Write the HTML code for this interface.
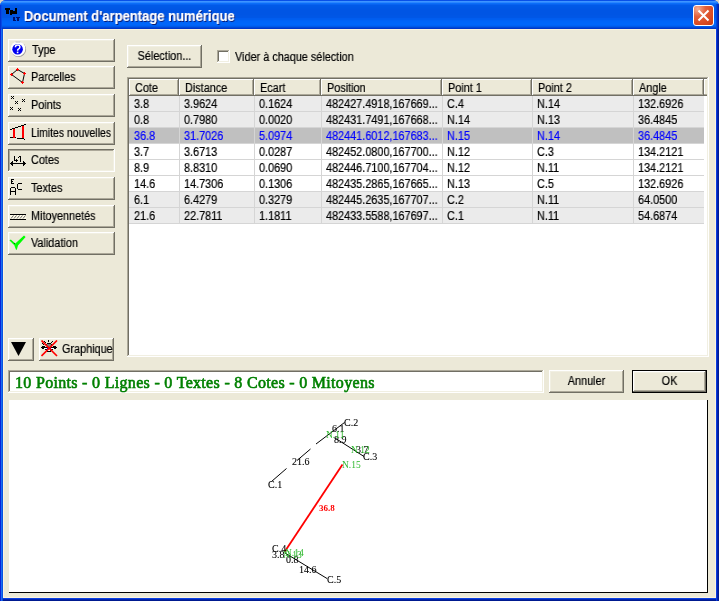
<!DOCTYPE html><html><head><meta charset="utf-8"><style>
*{margin:0;padding:0;box-sizing:border-box}
html,body{width:719px;height:601px;overflow:hidden;background:#ddd6c0}
body{position:relative;font-family:"Liberation Sans",sans-serif;font-size:11px;color:#000}
.a{position:absolute}
.t{position:absolute;white-space:nowrap;line-height:14px;font-size:12px;transform:scaleX(0.905);transform-origin:0 0;will-change:transform;-webkit-text-stroke:0.2px currentColor}
.c{transform-origin:50% 0}
.b{position:absolute;background:#ece9d8;box-shadow:inset -1px -1px #716f64,inset 1px 1px #ffffff,inset -2px -2px #aca899,inset 2px 2px #f1efe2}
.p{position:absolute;background:#ece9d8;box-shadow:inset -1px -1px #ffffff,inset 1px 1px #716f64,inset -2px -2px #f1efe2,inset 2px 2px #aca899}
.s{position:absolute;box-shadow:inset -1px -1px #ffffff,inset 1px 1px #aca899,inset -2px -2px #f1efe2,inset 2px 2px #716f64}
.h{position:absolute;background:#ece9d8;box-shadow:inset -1px -1px #716f64,inset 1px 1px #ffffff,inset -2px -2px #aca899}
</style></head><body><div class="a" style="left:0;top:0;width:719px;height:601px;background:#0a3ce0;border-radius:6px 6px 0 0;overflow:hidden">
<div class="a" style="left:0;top:0;width:719px;height:29px;background:linear-gradient(180deg,#0850e8 0px,#0850e8 1px,#3d95ff 1px,#3d95ff 2px,#2a85ff 2px,#2a85ff 3px,#0a6ef8 3px,#0a6ef8 4px,#0862f0 4px,#0862f0 5px,#005ae8 5px,#005ae8 6px,#0059e7 6px,#0059e7 7px,#0058e6 7px,#0058e6 8px,#0057e5 8px,#0057e5 9px,#0056e4 9px,#0056e4 10px,#0055e4 10px,#0055e4 11px,#0055e4 11px,#0055e4 12px,#0055e4 12px,#0055e4 13px,#0055e4 13px,#0055e4 14px,#0055e4 14px,#0055e4 15px,#0056e5 15px,#0056e5 16px,#0056e6 16px,#0056e6 17px,#0057e6 17px,#0057e6 18px,#005cef 18px,#005cef 19px,#005eef 19px,#005eef 20px,#0062f6 20px,#0062f6 21px,#0064f8 21px,#0064f8 22px,#0065f9 22px,#0065f9 23px,#0066fa 23px,#0066fa 24px,#0066fa 24px,#0066fa 25px,#0062f5 25px,#0062f5 26px,#005ae8 26px,#005ae8 27px,#0048d8 27px,#0048d8 28px,#0038c8 28px,#0038c8 29px)"></div>
<div class="a" style="left:0;top:29px;width:3px;height:572px;background:linear-gradient(90deg,#0a22d6 0,#0a22d6 1px,#1a6ef2 1px,#1a6ef2 2px,#0854e0 2px)"></div>
<div class="a" style="left:716px;top:29px;width:3px;height:572px;background:linear-gradient(90deg,#0a3ce0 0,#0a3ce0 1px,#0022b0 1px,#0022b0 2px,#001a90 2px)"></div>
<div class="a" style="left:3px;top:598px;width:713px;height:3px;background:linear-gradient(180deg,#0a40e0 0,#0a40e0 1px,#0022b0 1px,#0022b0 2px,#001a90 2px)"></div>
<div class="a" style="left:0;top:5px;width:2px;height:24px;background:linear-gradient(90deg,#0034d4 0,#0034d4 1px,#0848e4 1px)"></div>
<div class="a" style="left:716px;top:4px;width:3px;height:25px;background:linear-gradient(90deg,#0044dc 0,#0044dc 1px,#0030c4 1px,#0030c4 2px,#0022a8 2px)"></div>
</div>
<div class="a" style="left:3px;top:29px;width:713px;height:569px;background:#ece9d8;box-shadow:inset 1px 1px #fdf3dc,inset -1px -1px #fdf3dc"></div>
<svg class="a" style="left:0;top:0" width="24" height="24" shape-rendering="crispEdges">
<path fill="#000" d="M5 8h5v2h-5zM6 10h3v4h-3zM10 10h3v4h-3zM13 11h2v3h-2zM10 14h2v1h-2zM15 8h2v6h-2z"/>
<path fill="#00106a" d="M13 17h2v4h-2zM15 20h1v1h-1zM16 17h4v1h-4zM17 18h2v3h-2z"/>
</svg>
<div class="t" style="left:24px;top:8px;font-size:14px;font-weight:bold;color:#fff;line-height:16px;text-shadow:1px 1px #0a1a70;transform:scaleX(0.93);transform-origin:0 0">Document d'arpentage numérique</div>
<div class="a" style="left:693px;top:5px;width:21px;height:21px;border:1px solid #fff;border-radius:3px;background:radial-gradient(circle at 20% 15%,#f4ae94 0,#e2603c 35%,#da4a22 70%,#c63a14 100%)"></div>
<svg class="a" style="left:693px;top:5px" width="21" height="21"><path d="M5.5 5.5L15.5 15.5M15.5 5.5L5.5 15.5" stroke="#fff" stroke-width="2"/></svg>
<div class="b" style="left:8px;top:39px;width:107px;height:23px"></div>
<svg class="a" style="left:8px;top:39px" width="24" height="23" viewBox="0 0 24 23"><circle cx="10.5" cy="10.5" r="7.6" fill="#9a9a9a"/><circle cx="10" cy="9.8" r="7.4" fill="#fff"/><path d="M7.5 3h5" stroke="#bbb"/><circle cx="9.6" cy="10.2" r="5.3" fill="#0000f0"/><path d="M7.4 8.2q0-2.2 2.3-2.2t2.2 2q0 1.2-1.2 1.8t-1.1 1.9" stroke="#fff" stroke-width="1.5" fill="none"/><rect x="8.8" y="12.6" width="1.6" height="1.6" fill="#fff"/></svg>
<div class="t" style="left:32px;top:43px">Type</div>
<div class="b" style="left:8px;top:66px;width:107px;height:23px"></div>
<svg class="a" style="left:8px;top:66px" width="24" height="23" viewBox="0 0 24 23"><path d="M3.5 8.5L9.5 3.5L16.5 7.5L14.5 16.5Z" stroke="#000" fill="none" stroke-width="1"/><path shape-rendering="crispEdges" fill="#f00" d="M2 8h3v1h-3zM3 7h1v3h-1zM8 3h3v1h-3zM9 2h1v3h-1zM15 7h3v1h-3zM16 6h1v3h-1zM13 16h3v1h-3zM14 15h1v3h-1z"/></svg>
<div class="t" style="left:31px;top:70px">Parcelles</div>
<div class="b" style="left:8px;top:94px;width:107px;height:23px"></div>
<svg class="a" style="left:8px;top:94px" width="24" height="23" viewBox="0 0 24 23"><path d="M3 2h1v1h-1zM5 2h1v1h-1zM4 3h1v1h-1zM3 4h1v1h-1zM5 4h1v1h-1z" fill="#000"/><path d="M7 7h1v1h-1zM9 7h1v1h-1zM8 8h1v1h-1zM7 9h1v1h-1zM9 9h1v1h-1z" fill="#000"/><path d="M14 5h1v1h-1zM16 5h1v1h-1zM15 6h1v1h-1zM14 7h1v1h-1zM16 7h1v1h-1z" fill="#000"/><path d="M2 13h1v1h-1zM4 13h1v1h-1zM3 14h1v1h-1zM2 15h1v1h-1zM4 15h1v1h-1z" fill="#000"/><path d="M10 14h1v1h-1zM12 14h1v1h-1zM11 15h1v1h-1zM10 16h1v1h-1zM12 16h1v1h-1z" fill="#000"/></svg>
<div class="t" style="left:31px;top:98px">Points</div>
<div class="b" style="left:8px;top:122px;width:107px;height:23px"></div>
<svg class="a" style="left:8px;top:122px" width="24" height="23" viewBox="0 0 24 23"><g shape-rendering="crispEdges"><path fill="#000" d="M2 7h2v1h-2zM4 6h3v1h-3zM7 5h3v1h-3zM10 4h3v1h-3zM13 3h3v1h-3zM16 2h2v1h-2zM2 15h6v1h-6zM9 16h7v1h-7zM16 17h1v1h-1z"/><path fill="#f00" d="M5 7h2v9h-2zM14 4h2v12h-2z"/></g></svg>
<div class="t" style="left:31px;top:126px;transform:scaleX(0.87)">Limites nouvelles</div>
<div class="p" style="left:8px;top:149px;width:107px;height:23px"></div>
<svg class="a" style="left:8px;top:149px" width="24" height="23" viewBox="0 0 24 23"><g shape-rendering="crispEdges" fill="#000"><path d="M2 14h16v1h-16z"/><path d="M2 14h1v1h-1zM3 13h1v3h-1zM4 12h1v5h-1z"/><path d="M17 14h1v1h-1zM16 13h1v3h-1zM15 12h1v5h-1z"/><path d="M6 7h1v4h3v1h-4zM8 10h1v3h-1zM10 8h1v1h-1zM12 7h1v6h-1zM11 7h1v1h-1z"/></g></svg>
<div class="t" style="left:31px;top:153px">Cotes</div>
<div class="b" style="left:8px;top:177px;width:107px;height:23px"></div>
<svg class="a" style="left:8px;top:177px" width="24" height="23" viewBox="0 0 24 23"><path shape-rendering="crispEdges" fill="#000" d="M3 2h3v1h-3zM3 3h1v3h-1zM3 4h2v1h-2zM3 6h3v1h-3zM3 10h4v1h-4zM2 11h1v7h-1zM7 11h1v7h-1zM3 14h4v1h-4zM10 6h4v1h-4zM9 7h1v5h-1zM10 12h4v1h-4z"/></svg>
<div class="t" style="left:31px;top:181px">Textes</div>
<div class="b" style="left:8px;top:205px;width:107px;height:23px"></div>
<svg class="a" style="left:8px;top:205px" width="24" height="23" viewBox="0 0 24 23"><g shape-rendering="crispEdges"><path fill="#000" d="M2 9h16v1h-16zM2 14h16v1h-16z"/><path fill="#fffbe8" d="M2 10h16v4h-16z"/></g><g stroke="#666" stroke-width="1"><path d="M3 13.5L5.5 10.5M6 13.5L8.5 10.5M9 13.5L11.5 10.5M12 13.5L14.5 10.5M15 13.5L17.5 10.5"/></g></svg>
<div class="t" style="left:31px;top:209px">Mitoyennetés</div>
<div class="b" style="left:8px;top:232px;width:107px;height:23px"></div>
<svg class="a" style="left:8px;top:232px" width="24" height="23" viewBox="0 0 24 23"><path d="M1.5 8.6L2.8 7.4L7.3 11.6L16 3.6L17.6 5.1L10 13.5L8.8 17.8L8 17.8L6.3 13.2Z" fill="#00ff00"/><rect x="6" y="11" width="1" height="1" fill="#006600"/></svg>
<div class="t" style="left:31px;top:236px">Validation</div>
<div class="b" style="left:8px;top:338px;width:26px;height:23px"></div>
<svg class="a" style="left:8px;top:338px" width="26" height="23"><path d="M3 4H18L10.5 18Z" fill="#000"/></svg>
<div class="b" style="left:39px;top:338px;width:75px;height:23px"></div>
<svg class="a" style="left:41px;top:340px" width="17" height="17" viewBox="0 0 17 17"><g shape-rendering="crispEdges"><path fill="#000" d="M1 6h3v3h-3zM0 7h1v1h-1zM12 6h3v3h-3zM15 7h1v1h-1zM3 7h10v1h-10zM4 9h2v1h-2zM10 9h2v1h-2zM6 11h4v1h-4zM5 10h1v1h-1zM9 10h1v1h-1zM6 3h4v1h-4zM3 1h1v1h-1zM4 2h1v1h-1zM7 0h1v2h-1zM11 1h1v1h-1zM10 2h1v1h-1zM1 3h1v1h-1zM2 4h1v1h-1zM5 4h1v2h-1zM10 4h1v2h-1z"/><path fill="#fff" d="M3 8h3v1h-3zM10 8h3v1h-3zM7 10h2v1h-2z"/><path fill="#808080" d="M6 4h4v3h-4z"/><path fill="#0000ff" d="M6 8h1v1h-1zM9 8h1v1h-1z"/></g><path d="M0.5 0.5L16 16M16 0.5L0.5 16" stroke="#f00" stroke-width="1.7"/></svg>
<div class="t" style="left:62px;top:342px">Graphique</div>
<div class="b" style="left:127px;top:45px;width:75px;height:23px"></div>
<div class="t c" style="left:127px;top:49px;width:75px;text-align:center">Sélection...</div>
<div class="s" style="left:217px;top:50px;width:13px;height:13px;background:#fff"></div>
<div class="t" style="left:235px;top:50px">Vider à chaque sélection</div>
<div class="s" style="left:127px;top:77px;width:582px;height:280px;background:#fff"></div>
<div class="h" style="left:129px;top:79px;width:50px;height:17px"></div>
<div class="t" style="left:135px;top:81px">Cote</div>
<div class="h" style="left:179px;top:79px;width:75px;height:17px"></div>
<div class="t" style="left:185px;top:81px">Distance</div>
<div class="h" style="left:254px;top:79px;width:67px;height:17px"></div>
<div class="t" style="left:260px;top:81px">Ecart</div>
<div class="h" style="left:321px;top:79px;width:121px;height:17px"></div>
<div class="t" style="left:327px;top:81px">Position</div>
<div class="h" style="left:442px;top:79px;width:90px;height:17px"></div>
<div class="t" style="left:448px;top:81px">Point 1</div>
<div class="h" style="left:532px;top:79px;width:101px;height:17px"></div>
<div class="t" style="left:538px;top:81px">Point 2</div>
<div class="h" style="left:633px;top:79px;width:71px;height:17px"></div>
<div class="t" style="left:639px;top:81px">Angle</div>
<div class="a" style="left:704px;top:79px;width:3px;height:17px;background:#ece9d8;box-shadow:inset 0 -1px #716f64,inset 0 -2px #aca899,inset 1px 1px #fff"></div>
<div class="a" style="left:129px;top:96px;width:575px;height:15px;background:#ebebeb"></div>
<div class="a" style="left:129px;top:111px;width:575px;height:1px;background:#d5d5d5"></div>
<div class="t" style="left:134px;top:97px;color:#000">3.8</div>
<div class="t" style="left:184px;top:97px;color:#000">3.9624</div>
<div class="t" style="left:259px;top:97px;color:#000">0.1624</div>
<div class="t" style="left:326px;top:97px;color:#000">482427.4918,167669...</div>
<div class="t" style="left:447px;top:97px;color:#000">C.4</div>
<div class="t" style="left:537px;top:97px;color:#000">N.14</div>
<div class="t" style="left:638px;top:97px;color:#000">132.6926</div>
<div class="a" style="left:129px;top:112px;width:575px;height:15px;background:#ebebeb"></div>
<div class="a" style="left:129px;top:127px;width:575px;height:1px;background:#d5d5d5"></div>
<div class="t" style="left:134px;top:113px;color:#000">0.8</div>
<div class="t" style="left:184px;top:113px;color:#000">0.7980</div>
<div class="t" style="left:259px;top:113px;color:#000">0.0020</div>
<div class="t" style="left:326px;top:113px;color:#000">482431.7491,167668...</div>
<div class="t" style="left:447px;top:113px;color:#000">N.14</div>
<div class="t" style="left:537px;top:113px;color:#000">N.13</div>
<div class="t" style="left:638px;top:113px;color:#000">36.4845</div>
<div class="a" style="left:129px;top:128px;width:575px;height:15px;background:#c0c0c0"></div>
<div class="a" style="left:129px;top:143px;width:575px;height:1px;background:#d5d5d5"></div>
<div class="t" style="left:134px;top:129px;color:#0000ff">36.8</div>
<div class="t" style="left:184px;top:129px;color:#0000ff">31.7026</div>
<div class="t" style="left:259px;top:129px;color:#0000ff">5.0974</div>
<div class="t" style="left:326px;top:129px;color:#0000ff">482441.6012,167683...</div>
<div class="t" style="left:447px;top:129px;color:#0000ff">N.15</div>
<div class="t" style="left:537px;top:129px;color:#0000ff">N.14</div>
<div class="t" style="left:638px;top:129px;color:#0000ff">36.4845</div>
<div class="a" style="left:129px;top:144px;width:575px;height:15px;background:#fff"></div>
<div class="a" style="left:129px;top:159px;width:575px;height:1px;background:#d5d5d5"></div>
<div class="t" style="left:134px;top:145px;color:#000">3.7</div>
<div class="t" style="left:184px;top:145px;color:#000">3.6713</div>
<div class="t" style="left:259px;top:145px;color:#000">0.0287</div>
<div class="t" style="left:326px;top:145px;color:#000">482452.0800,167700...</div>
<div class="t" style="left:447px;top:145px;color:#000">N.12</div>
<div class="t" style="left:537px;top:145px;color:#000">C.3</div>
<div class="t" style="left:638px;top:145px;color:#000">134.2121</div>
<div class="a" style="left:129px;top:160px;width:575px;height:15px;background:#fff"></div>
<div class="a" style="left:129px;top:175px;width:575px;height:1px;background:#d5d5d5"></div>
<div class="t" style="left:134px;top:161px;color:#000">8.9</div>
<div class="t" style="left:184px;top:161px;color:#000">8.8310</div>
<div class="t" style="left:259px;top:161px;color:#000">0.0690</div>
<div class="t" style="left:326px;top:161px;color:#000">482446.7100,167704...</div>
<div class="t" style="left:447px;top:161px;color:#000">N.12</div>
<div class="t" style="left:537px;top:161px;color:#000">N.11</div>
<div class="t" style="left:638px;top:161px;color:#000">134.2121</div>
<div class="a" style="left:129px;top:176px;width:575px;height:15px;background:#fff"></div>
<div class="a" style="left:129px;top:191px;width:575px;height:1px;background:#d5d5d5"></div>
<div class="t" style="left:134px;top:177px;color:#000">14.6</div>
<div class="t" style="left:184px;top:177px;color:#000">14.7306</div>
<div class="t" style="left:259px;top:177px;color:#000">0.1306</div>
<div class="t" style="left:326px;top:177px;color:#000">482435.2865,167665...</div>
<div class="t" style="left:447px;top:177px;color:#000">N.13</div>
<div class="t" style="left:537px;top:177px;color:#000">C.5</div>
<div class="t" style="left:638px;top:177px;color:#000">132.6926</div>
<div class="a" style="left:129px;top:192px;width:575px;height:15px;background:#ebebeb"></div>
<div class="a" style="left:129px;top:207px;width:575px;height:1px;background:#d5d5d5"></div>
<div class="t" style="left:134px;top:193px;color:#000">6.1</div>
<div class="t" style="left:184px;top:193px;color:#000">6.4279</div>
<div class="t" style="left:259px;top:193px;color:#000">0.3279</div>
<div class="t" style="left:326px;top:193px;color:#000">482445.2635,167707...</div>
<div class="t" style="left:447px;top:193px;color:#000">C.2</div>
<div class="t" style="left:537px;top:193px;color:#000">N.11</div>
<div class="t" style="left:638px;top:193px;color:#000">64.0500</div>
<div class="a" style="left:129px;top:208px;width:575px;height:15px;background:#ebebeb"></div>
<div class="a" style="left:129px;top:223px;width:575px;height:1px;background:#d5d5d5"></div>
<div class="t" style="left:134px;top:209px;color:#000">21.6</div>
<div class="t" style="left:184px;top:209px;color:#000">22.7811</div>
<div class="t" style="left:259px;top:209px;color:#000">1.1811</div>
<div class="t" style="left:326px;top:209px;color:#000">482433.5588,167697...</div>
<div class="t" style="left:447px;top:209px;color:#000">C.1</div>
<div class="t" style="left:537px;top:209px;color:#000">N.11</div>
<div class="t" style="left:638px;top:209px;color:#000">54.6874</div>
<div class="a" style="left:179px;top:96px;width:1px;height:128px;background:#d5d5d5"></div>
<div class="a" style="left:254px;top:96px;width:1px;height:128px;background:#d5d5d5"></div>
<div class="a" style="left:321px;top:96px;width:1px;height:128px;background:#d5d5d5"></div>
<div class="a" style="left:442px;top:96px;width:1px;height:128px;background:#d5d5d5"></div>
<div class="a" style="left:532px;top:96px;width:1px;height:128px;background:#d5d5d5"></div>
<div class="a" style="left:633px;top:96px;width:1px;height:128px;background:#d5d5d5"></div>
<div class="s" style="left:8px;top:370px;width:536px;height:23px;background:#fff"></div>
<div class="t" style="left:15px;top:374px;font-family:'Liberation Serif',serif;font-weight:normal;font-size:16px;line-height:18px;color:#008000;letter-spacing:0.31px;transform:none;-webkit-text-stroke:0.6px currentColor">10 Points - 0 Lignes - 0 Textes - 8 Cotes - 0 Mitoyens</div>
<div class="b" style="left:549px;top:370px;width:75px;height:23px"></div>
<div class="t c" style="left:549px;top:374px;width:75px;text-align:center">Annuler</div>
<div class="a" style="left:632px;top:370px;width:75px;height:23px;border:1px solid #000;background:#ece9d8;box-shadow:inset -1px -1px #716f64,inset 1px 1px #ffffff,inset -2px -2px #aca899,inset 2px 2px #f1efe2"></div>
<div class="t c" style="left:632px;top:374px;width:75px;text-align:center">OK</div>
<div class="a" style="left:9px;top:400px;width:699px;height:193px;background:#fff;border-right:1px solid #000;border-bottom:1px solid #000"></div>
<svg class="a" style="left:9px;top:400px;will-change:transform" width="698" height="192" viewBox="9 400 698 192" font-family="Liberation Serif" font-size="10">
<g stroke="#000" fill="none" stroke-width="1">
<path d="M271.5 481.5L286.5 468.5M297 460.5L310.5 449M316 444L344.5 422.5"/>
<path d="M335 438L364 456.5"/>
<path d="M285 553L327 578.5"/>
</g>
<path d="M342.5 464.5L284.5 552" stroke="#f00" stroke-width="1.8"/>
<g fill="#000" stroke="#000" stroke-width="0.1">
<text x="344" y="426">C.2</text>
<text x="332" y="432">6.1</text>
<text x="334" y="443">8.9</text>
<text x="356" y="453">3.7</text>
<text x="363" y="460">C.3</text>
<text x="292" y="465">21.6</text>
<text x="268" y="488">C.1</text>
<text x="272" y="552">C.4</text>
<text x="272" y="558">3.8</text>
<text x="286" y="563">0.8</text>
<text x="299" y="573">14.6</text>
<text x="327" y="583">C.5</text>
</g>
<g fill="#2eb82e" font-size="9.5">
<text x="326" y="438">N.11</text>
<text x="351" y="453">N.12</text>
<text x="342" y="468">N.15</text>
<text x="283" y="558">N.13</text>
<text x="285" y="556">N.14</text>
</g>
<text x="319" y="511" fill="#f00" font-weight="bold" font-size="9">36.8</text>
</svg></body></html>
